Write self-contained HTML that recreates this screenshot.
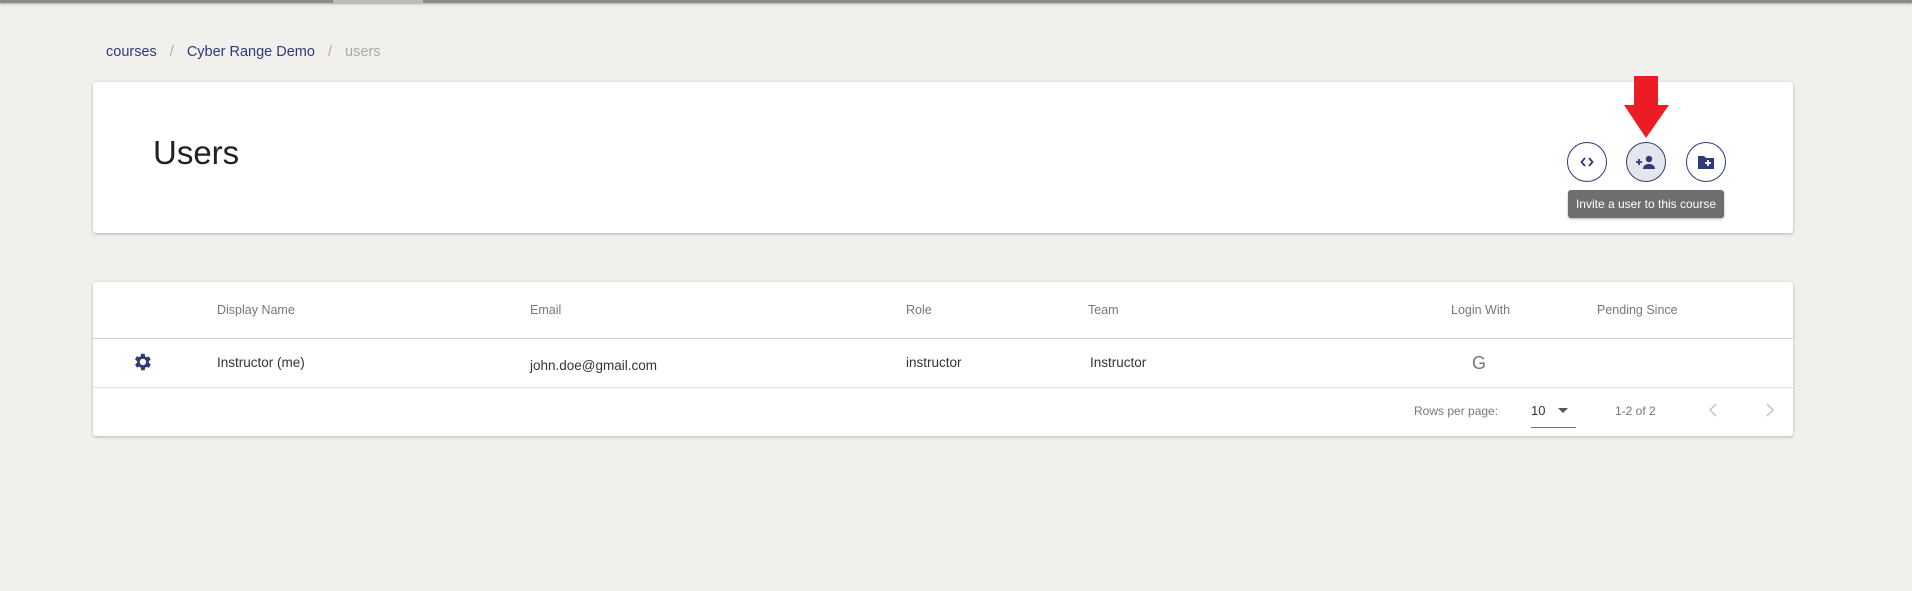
<!DOCTYPE html>
<html><head><style>
*{margin:0;padding:0;box-sizing:border-box}
body{width:1912px;height:591px;background:#f1f0ec;font-family:"Liberation Sans",sans-serif;position:relative;overflow:hidden}
.a{position:absolute}
.top{left:0;top:0;width:1912px;height:3px;background:#8a8a8a;box-shadow:0 1px 2px rgba(0,0,0,.3)}
.bc{top:44px;left:106px;font-size:14.5px;color:#2f3a78}
.bc .s{color:#aaa;margin:0 13px}
.card{background:#fff;box-shadow:0 1px 3px rgba(0,0,0,.25);border-radius:3px}
.h{font-size:12.5px;color:#777;top:303px}
.c{font-size:13.5px;color:#333;top:355px}
.btn{width:40px;height:40px;border:1.3px solid #2f3a78;border-radius:50%;top:142px;display:flex;align-items:center;justify-content:center;background:#fff}
</style></head><body>
<div class="a top"></div>
<div class="a" style="left:333px;top:0;width:90px;height:3px;background:#bbb"></div>
<div class="a bc">courses<span class="s">/</span>Cyber Range Demo<span class="s">/</span><span style="color:#a8a8a8">users</span></div>
<div class="a card" style="left:93px;top:82px;width:1700px;height:151px"></div>
<div class="a" style="left:153px;top:134px;font-size:33px;color:#222">Users</div>
<div class="a btn" style="left:1567px"><svg width="16" height="16" viewBox="0 0 16 16"><path d="M6 4L2.5 8 6 12M10 4l3.5 4L10 12" stroke="#2f3a78" stroke-width="1.8" fill="none"/></svg></div>
<div class="a btn" style="left:1626px;background:#e4e6ef"><svg width="22" height="16" viewBox="0 0 22 16"><path d="M1 8h6M4 5v6" stroke="#2f3a78" stroke-width="1.8"/><circle cx="14" cy="5" r="3.2" fill="#2f3a78"/><path d="M8 15c0-3.5 3-5 6-5s6 1.5 6 5z" fill="#2f3a78"/></svg></div>
<div class="a btn" style="left:1686px"><svg width="18" height="16" viewBox="0 0 18 16"><path d="M1 2h6l2 2h8v11H1z" fill="#2f3a78"/><path d="M11 6v6M8 9h6" stroke="#fff" stroke-width="1.8"/></svg></div>
<svg class="a" style="left:1624px;top:76px" width="46" height="64" viewBox="0 0 46 64"><path d="M10 0h24v29h11L22 62 0 29h10z" fill="#ec1c24"/></svg>
<div class="a" style="left:1568px;top:190px;width:156px;height:28px;background:#6e6e6e;border-radius:3px;color:#fff;font-size:12px;line-height:28px;text-align:center;box-shadow:0 1px 2px rgba(0,0,0,.3)">Invite a user to this course</div>
<div class="a card" style="left:93px;top:282px;width:1700px;height:154px"></div>
<div class="a" style="left:93px;top:338px;width:1700px;height:1px;background:#cfcfcf"></div>
<div class="a" style="left:93px;top:387px;width:1700px;height:1px;background:#e0e0e0"></div>
<div class="a h" style="left:217px">Display Name</div>
<div class="a h" style="left:530px">Email</div>
<div class="a h" style="left:906px">Role</div>
<div class="a h" style="left:1088px">Team</div>
<div class="a h" style="left:1451px">Login With</div>
<div class="a h" style="left:1597px">Pending Since</div>
<svg class="a" style="left:131px;top:351px" width="22" height="22" viewBox="0 0 24 24"><path fill="#2f3a78" d="M19.4 13a7.5 7.5 0 000-2l2.1-1.6-2-3.5-2.5 1a7.3 7.3 0 00-1.7-1L15 3h-4l-.4 2.7a7.3 7.3 0 00-1.7 1l-2.5-1-2 3.5L6.6 11a7.5 7.5 0 000 2l-2.1 1.6 2 3.5 2.5-1a7.3 7.3 0 001.7 1L11 21h4l.4-2.7a7.3 7.3 0 001.7-1l2.5 1 2-3.5zM13 15.5a3.5 3.5 0 110-7 3.5 3.5 0 010 7z"/></svg>
<div class="a c" style="left:217px">Instructor (me)</div>
<div class="a c" style="left:530px;top:358px">john.doe@gmail.com</div>
<div class="a c" style="left:906px">instructor</div>
<div class="a c" style="left:1090px">Instructor</div>
<div class="a" style="left:1472px;top:353px;font-size:18px;color:#777">G</div>
<div class="a" style="left:1414px;top:404px;font-size:12px;color:#777">Rows per page:</div>
<div class="a" style="left:1531px;top:403px;font-size:13px;color:#333">10</div>
<div class="a" style="left:1558px;top:408px;width:0;height:0;border-left:5px solid transparent;border-right:5px solid transparent;border-top:5px solid #555"></div>
<div class="a" style="left:1531px;top:427px;width:45px;height:1px;background:#777"></div>
<div class="a" style="left:1615px;top:404px;font-size:12px;color:#777">1-2 of 2</div>
<svg class="a" style="left:1707px;top:402px" width="12" height="16" viewBox="0 0 12 16"><path d="M9 2L3 8l6 6" stroke="#bbb" stroke-width="1.3" fill="none"/></svg>
<svg class="a" style="left:1764px;top:402px" width="12" height="16" viewBox="0 0 12 16"><path d="M3 2l6 6-6 6" stroke="#bbb" stroke-width="1.3" fill="none"/></svg>
</body></html>
